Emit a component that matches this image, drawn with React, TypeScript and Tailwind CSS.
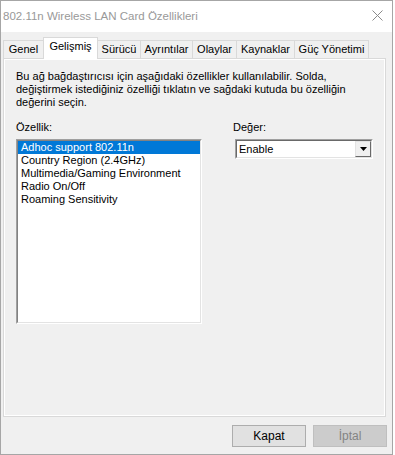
import React from 'react';

const tabs = [
  { label: 'Genel', w: 'w-[41px]' },
  { label: 'Gelişmiş', w: 'w-[55px]', active: true },
  { label: 'Sürücü', w: 'w-[44px]' },
  { label: 'Ayrıntılar', w: 'w-[53px]' },
  { label: 'Olaylar', w: 'w-[45px]' },
  { label: 'Kaynaklar', w: 'w-[59px]' },
  { label: 'Güç Yönetimi', w: 'w-[75px]' },
];

const props = [
  'Adhoc support 802.11n',
  'Country Region (2.4GHz)',
  'Multimedia/Gaming Environment',
  'Radio On/Off',
  'Roaming Sensitivity',
];

// classic windows sunken border (two nested 1px frames)
function Sunken({ className, children }: { className?: string; children: React.ReactNode }) {
  return (
    <div className={`border border-t-[#a0a0a0] border-l-[#a0a0a0] border-b-white border-r-white ${className ?? ''}`}>
      <div className="h-full border border-t-[#696969] border-l-[#696969] border-b-[#e3e3e3] border-r-[#e3e3e3] bg-white">
        {children}
      </div>
    </div>
  );
}

export default function App() {
  return (
    <div className="w-[395px] h-[455px] bg-white font-['Liberation_Sans',Arial,sans-serif] text-[11px] leading-[13px] text-black">
      <div className="w-[393px] h-[455px] border border-[#a6a6a6] flex flex-col">
        {/* Title bar */}
        <div className="h-[31px] shrink-0 bg-white flex items-center justify-between pl-[2px] pr-[9px]">
          <span className="text-[11.5px] text-[#999999]">802.11n Wireless LAN Card Özellikleri</span>
          <svg width="11" height="11" viewBox="0 0 11 11" className="mb-[3px]">
            <path d="M0.5 0.5 L10.5 10.5 M10.5 0.5 L0.5 10.5" stroke="#8a8a8a" strokeWidth="1" />
          </svg>
        </div>

        {/* Body */}
        <div className="flex-1 bg-[#f0f0f0] flex flex-col pt-[5px] pl-[2px] pr-[5px] pb-[7px]">
          {/* Tab strip */}
          <div className="flex items-end h-[21px] relative z-10">
            {tabs.map((t) =>
              t.active ? (
                <div
                  key={t.label}
                  className={`${t.w} h-[22px] -ml-px -mb-px bg-white border-l border-t border-r border-[#d9d9d9] flex justify-center pt-[2px]`}
                >
                  {t.label}
                </div>
              ) : (
                <div
                  key={t.label}
                  className={`${t.w} h-[18px] first:ml-0 -ml-px bg-[#f0f0f0] border-l border-t border-r border-[#d9d9d9] flex justify-center pt-[2px]`}
                >
                  {t.label}
                </div>
              )
            )}
          </div>

          {/* Tab panel */}
          <div className="w-[383px] h-[359px] border border-[#d9d9d9]">
            <div className="h-full border border-white bg-[#f0f0f0] pl-[11px] pt-[10px]">
              <p className="w-[360px]">
                Bu ağ bağdaştırıcısı için aşağıdaki özellikler kullanılabilir. Solda,
                <br />
                değiştirmek istediğiniz özelliği tıklatın ve sağdaki kutuda bu özelliğin
                <br />
                değerini seçin.
              </p>

              <div className="flex mt-[12px]">
                <div className="w-[186px]">
                  <div className="mb-[5px]">Özellik:</div>
                  <div className="w-[186px] h-[185px] border border-t-[#a0a0a0] border-l-[#a0a0a0] border-b-white border-r-white">
                    <div className="h-full border border-t-[#828282] border-l-[#828282] border-b-[#e3e3e3] border-r-[#e3e3e3] bg-white">
                      {props.map((p, i) => (
                        <div
                          key={p}
                          className={`h-[13px] pl-[3px] leading-[13px] ${i === 0 ? 'bg-[#0078d7] text-white' : ''}`}
                        >
                          {p}
                        </div>
                      ))}
                    </div>
                  </div>
                </div>

                <div className="ml-[31px]">
                  <div className="mb-[5px]">Değer:</div>
                  <Sunken className="ml-[2px] w-[138px] h-[20px]">
                    <div className="flex items-center h-full">
                      <span className="flex-1 pl-[2px]">Enable</span>
                      <div className="w-[16px] h-[16px] border border-t-[#e3e3e3] border-l-[#e3e3e3] border-b-[#696969] border-r-[#696969] bg-[#f0f0f0] flex items-center justify-center">
                        <svg width="7" height="4" viewBox="0 0 7 4">
                          <path d="M0 0 H7 L3.5 4 Z" fill="#000" />
                        </svg>
                      </div>
                    </div>
                  </Sunken>
                </div>
              </div>
            </div>
          </div>

          {/* Buttons */}
          <div className="flex justify-end gap-[7px] mt-[8px]">
            <button className="w-[74px] h-[22px] border border-[#adadad] bg-[#e1e1e1] text-[12px] text-black">
              Kapat
            </button>
            <button className="w-[74px] h-[22px] border border-[#bfbfbf] bg-[#cccccc] text-[12px] text-[#838383]">
              İptal
            </button>
          </div>
        </div>
      </div>
    </div>
  );
}
